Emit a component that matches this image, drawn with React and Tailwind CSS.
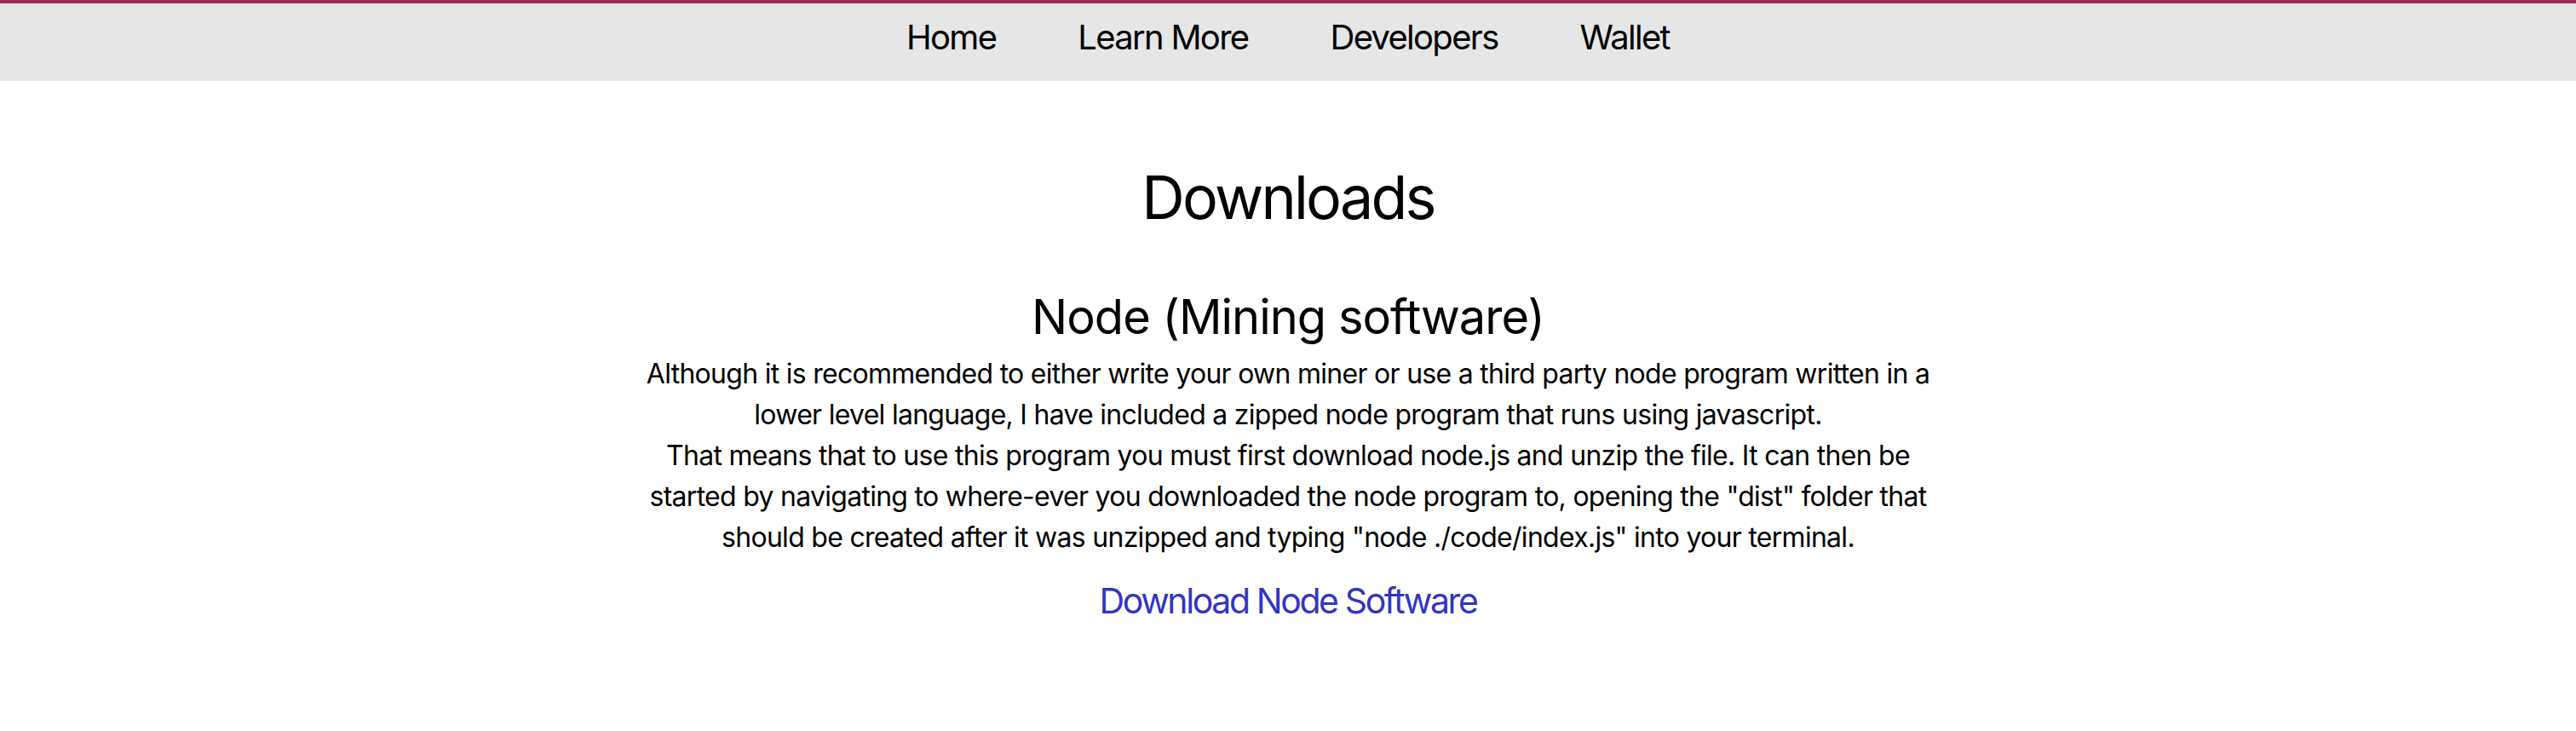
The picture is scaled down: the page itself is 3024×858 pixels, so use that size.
import React from "react";

const links = ["Home", "Learn More", "Developers", "Wallet"];

export default function App() {
  return (
    <div className="min-h-screen bg-white text-black font-['Inter',sans-serif]">
      <nav className="h-[95px] border-t-4 border-[#a3295a] bg-[#e6e6e6] flex justify-center items-start pt-[14px] gap-[96px]">
        {links.map((l) => (
          <a key={l} href="#" className="text-[40px] leading-[52px] tracking-[-1.7px]">
            {l}
          </a>
        ))}
      </nav>
      <main className="mx-auto w-[1530px] text-center">
        <h1 className="mt-[95px] text-[70px] leading-[84px] tracking-[-2.8px]">Downloads</h1>
        <h2 className="mt-[62px] text-[56px] leading-[72px] tracking-[-1px]">Node (Mining software)</h2>
        <p className="mt-[7px] text-[32px] leading-[48px] tracking-[-0.72px]">
          Although it is recommended to either write your own miner or use a third party node program written in a
          lower level language, I have included a zipped node program that runs using javascript.
          <br />
          That means that to use this program you must first download node.js and unzip the file. It can then be
          started by navigating to where-ever you downloaded the node program to, opening the "dist" folder that
          should be created after it was unzipped and typing "node ./code/index.js" into your terminal.
        </p>
        <a href="#" className="inline-block mt-[22px] text-[41px] leading-[56px] tracking-[-2.4px] text-[#3434c4]">
          Download Node Software
        </a>
      </main>
    </div>
  );
}
